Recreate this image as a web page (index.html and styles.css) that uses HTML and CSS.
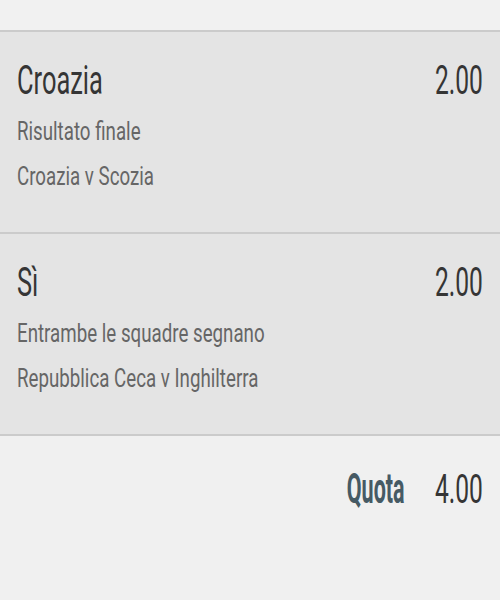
FILE: index.html
```html
<html>
    <head>
        <title>Schedina</title>
        <link rel="stylesheet" href="styles.css">
    </head>
    <body>
        <div class="top"></div>
        <div class="slip">
            <div class="pick">
                <div class="head">
                    <span class="name">Croazia</span>
                    <span class="odd">2.00</span>
                </div>
                <p class="info"><span>Risultato finale</span></p>
                <p class="info"><span>Croazia v Scozia</span></p>
            </div>
            <div class="pick">
                <div class="head">
                    <span class="name">Sì</span>
                    <span class="odd">2.00</span>
                </div>
                <p class="info"><span>Entrambe le squadre segnano</span></p>
                <p class="info"><span>Repubblica Ceca v Inghilterra</span></p>
            </div>
            <div class="total">
                <span class="label">Quota</span>
                <span class="odd">4.00</span>
            </div>
        </div>
    </body>
</html>
```

FILE: styles.css
```css
*{
    margin: 0;
    padding: 0;
    box-sizing: border-box;
}
body{
    background-color: #f0f0f0;
    font-family: Roboto, "Liberation Sans", sans-serif;
    width: 500px;
    overflow: hidden;
}
.top{
    height: 32px;
    background-color: #f1f1f1;
    border-bottom: 2px solid #cbcbcb;
}
.pick{
    background-color: #e4e4e4;
    border-bottom: 2px solid #cbcbcb;
    padding: 24px 17px 33px 17px;
}
.head{
    display: flex;
    justify-content: space-between;
    margin-bottom: 5px;
}
.name, .odd{
    display: inline-block;
    font-size: 41px;
    line-height: 48px;
    color: #353535;
    white-space: nowrap;
}
.name{
    transform: scaleX(0.62);
    transform-origin: left;
}
.odd{
    transform: scaleX(0.6);
    transform-origin: right;
}
.info{
    font-size: 26px;
    line-height: 45px;
    color: #666;
    white-space: nowrap;
}
.info span{
    display: inline-block;
    transform: scaleX(0.72);
    transform-origin: left;
}
.total{
    display: flex;
    justify-content: flex-end;
    align-items: baseline;
    padding: 28px 17px 0 0;
}
.label{
    display: inline-block;
    font-size: 43px;
    line-height: 48px;
    font-weight: 700;
    color: #465a64;
    margin-right: -2px;
    transform: scaleX(0.5);
    transform-origin: right;
}
```
